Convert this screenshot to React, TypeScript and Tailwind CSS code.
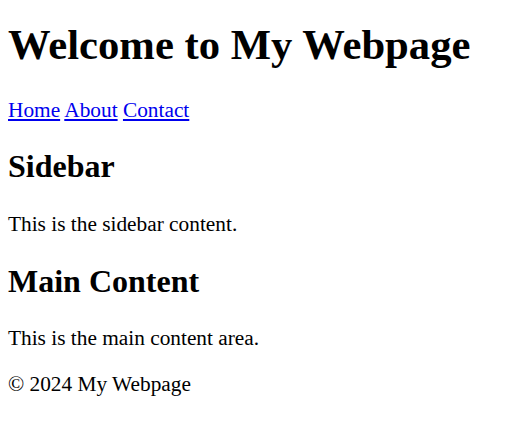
export default function App() {
  return (
    <div className="min-h-screen bg-white px-2 pt-[21px] text-black font-['Liberation_Serif','Times_New_Roman',serif]">
      <header>
        <h1 className="text-[42.67px] leading-[48px] font-bold">Welcome to My Webpage</h1>
        <nav className="mt-[29px] text-[21.33px] leading-[24px]">
          <a href="#" className="text-[#0000ee] underline">Home</a>{' '}
          <a href="#" className="text-[#0000ee] underline">About</a>{' '}
          <a href="#" className="text-[#0000ee] underline">Contact</a>
        </nav>
      </header>

      {/* sidebar */}
      <aside className="mt-[26px]">
        <h2 className="text-[32px] leading-[36px] font-bold">Sidebar</h2>
        <p className="mt-[28px] text-[21.33px] leading-[24px]">This is the sidebar content.</p>
      </aside>

      {/* main */}
      <main className="mt-[27px]">
        <h2 className="text-[32px] leading-[36px] font-bold">Main Content</h2>
        <p className="mt-[27px] text-[21.33px] leading-[24px]">This is the main content area.</p>
      </main>

      <footer className="mt-[22px] text-[21.33px] leading-[24px]">
        <p>© 2024 My Webpage</p>
      </footer>
    </div>
  );
}
